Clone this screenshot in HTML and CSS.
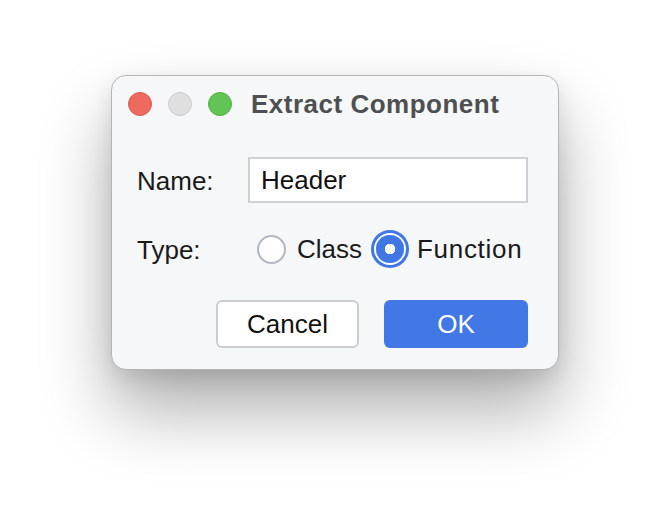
FILE: index.html
```html
<!DOCTYPE html>
<html>
<head>
<meta charset="utf-8">
<link rel="stylesheet" href="styles.css">
</head>
<body>
<div class="stage">
  <div class="window">
    <div class="titlebar">
      <div class="lights">
        <span class="light red"></span>
        <span class="light gray"></span>
        <span class="light green"></span>
      </div>
      <div class="title">Extract Component</div>
    </div>
    <div class="form">
      <label class="label">Name:</label>
      <div class="input">Header</div>
      <label class="label">Type:</label>
      <div class="radios">
        <span class="radio"></span><span class="rtext">Class</span>
        <span class="radio checked"></span><span class="rtext wide">Function</span>
      </div>
    </div>
    <div class="buttons">
      <button class="btn cancel">Cancel</button>
      <button class="btn ok">OK</button>
    </div>
  </div>
</div>
</body>
</html>
```

FILE: styles.css
```css
html, body {
  margin: 0;
  padding: 0;
  background: #ffffff;
}
body {
  width: 670px;
  height: 518px;
  overflow: hidden;
  font-family: "Liberation Sans", Arial, sans-serif;
}
.stage {
  display: flex;
  padding: 75px 0 0 111px;
}
.window {
  width: 446px;
  height: 293px;
  background: #f6f7f9;
  border: 1px solid #b4b4b6;
  border-radius: 15px;
  box-shadow: 0 40px 70px rgba(0, 0, 0, 0.32), 0 8px 20px rgba(0, 0, 0, 0.10);
  display: flex;
  flex-direction: column;
}
.titlebar {
  height: 56px;
  display: flex;
  align-items: center;
  padding-left: 16px;
}
.lights {
  display: flex;
  gap: 16px;
}
.light {
  width: 24px;
  height: 24px;
  border-radius: 50%;
  box-sizing: border-box;
}
.red { background: #ee6a5f; border: 1px solid #d65a50; }
.gray { background: #dfdfe0; border: 1px solid #cbcbcd; }
.green { background: #61c454; border: 1px solid #52ad45; }
.title {
  margin-left: 19px;
  font-size: 26px;
  font-weight: bold;
  color: #4e4f51;
  letter-spacing: 0.5px;
}
.form {
  margin-top: 25px;
  padding-left: 25px;
  padding-right: 30px;
  display: grid;
  grid-template-columns: 111px 1fr;
  grid-template-rows: 46px 30px;
  row-gap: 31px;
  align-items: center;
}
.label {
  font-size: 26px;
  color: #1a1a1a;
  position: relative;
  top: 1px;
}
.input {
  height: 46px;
  box-sizing: border-box;
  border: 2px solid #cdd0d6;
  background: #ffffff;
  font-size: 26px;
  color: #111;
  padding-left: 11px;
  line-height: 42px;
}
.radios {
  display: flex;
  align-items: center;
  padding-left: 9px;
}
.radio {
  width: 29px;
  height: 29px;
  box-sizing: border-box;
  border-radius: 50%;
  border: 2px solid #b3b7c1;
  background: #fff;
  flex: none;
}
.radio.checked {
  margin-left: 14px;
  width: 28px;
  height: 28px;
  border: none;
  background: radial-gradient(circle, #ffffff 0 5px, #3f78e6 5.5px);
  box-shadow: 0 0 0 2px #ffffff, 0 0 0 5px #3f78e6;
}
.rtext {
  font-size: 26px;
  color: #1a1a1a;
  margin-left: 11px;
}
.rtext.wide {
  margin-left: 13px;
  letter-spacing: 0.7px;
}
.buttons {
  margin-top: 36px;
  display: flex;
  justify-content: flex-end;
  gap: 25px;
  padding-right: 30px;
}
.btn {
  height: 48px;
  box-sizing: border-box;
  border-radius: 6px;
  font-family: "Liberation Sans", Arial, sans-serif;
  font-size: 26px;
  padding: 0;
}
.cancel {
  width: 143px;
  background: #ffffff;
  border: 2px solid #cbcdd3;
  color: #111;
}
.ok {
  width: 144px;
  background: #4178e5;
  border: none;
  color: #ffffff;
}
```
